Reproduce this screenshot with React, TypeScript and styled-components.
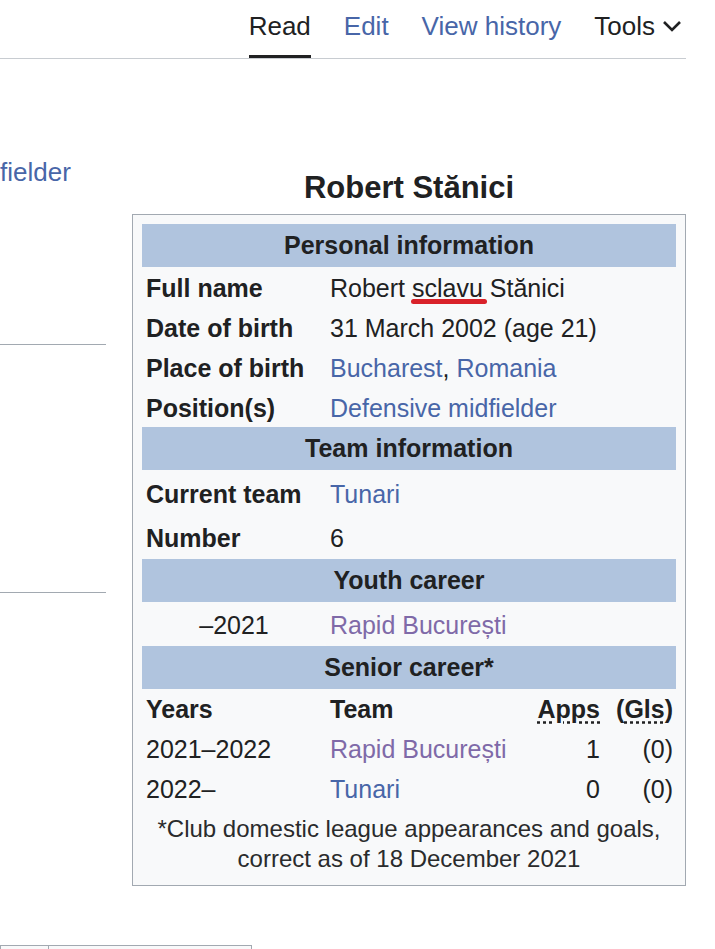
import styled, {createGlobalStyle} from "styled-components";

const GlobalStyle = createGlobalStyle`
	body {
		margin: 0;
		background: #ffffff;
		color: #202122;
		font-family: "Liberation Sans", Arial, sans-serif;
		overflow: hidden;
	}
`;

const Page = styled.div`
	width: 686px;
`;

const TopBar = styled.div`
	display: flex;
	justify-content: flex-end;
	gap: 33px;
	height: 58px;
	padding-right: 3px;
	border-bottom: 1px solid #c8ccd1;
`;

const Tab = styled.a<{ $active?: boolean; $link?: boolean }>`
	display: flex;
	align-items: flex-start;
	gap: 6px;
	box-sizing: border-box;
	height: 58px;
	padding-top: 10px;
	font-size: 26px;
	line-height: 32px;
	color: ${(p) => (p.$link ? "#4866a8" : "#202122")};
	border-bottom: 3px solid ${(p) => (p.$active ? "#202122" : "transparent")};
	text-decoration: none;
`;

const Chevron = styled.svg`
	margin-top: 9px;
`;

const Content = styled.div`
	display: flex;
	align-items: flex-start;
`;

const LeftCol = styled.div`
	display: flex;
	flex-direction: column;
	width: 106px;
	flex-shrink: 0;
	padding-top: 93px;
`;

const Lead = styled.a`
	height: 40px;
	font-size: 26px;
	line-height: 40px;
	color: #4866a8;
	white-space: nowrap;
`;

const Rule = styled.div<{ $top: number }>`
	height: 1px;
	margin-top: ${(p) => p.$top}px;
	background: #a2a9b1;
`;

const InfoboxWrap = styled.div`
	width: 554px;
	margin-left: 26px;
	margin-top: 109px;
`;

const Caption = styled.div`
	font-size: 31px;
	font-weight: bold;
	line-height: 40px;
	text-align: center;
	margin-bottom: 6px;
`;

const Box = styled.div`
	display: flex;
	flex-direction: column;
	border: 1px solid #a2a9b1;
	background: #f8f9fa;
	padding: 9px;
	font-size: 25px;
	line-height: 1.25;
`;

const SectionHeader = styled.div`
	display: flex;
	align-items: center;
	justify-content: center;
	height: 43px;
	background: #b0c4de;
	font-weight: bold;
`;

const InfoRow = styled.div<{ $h: number }>`
	display: flex;
	align-items: center;
	box-sizing: border-box;
	height: ${(p) => p.$h}px;
	padding-top: 4px;
`;

const Label = styled.div<{ $center?: boolean }>`
	box-sizing: border-box;
	width: 184px;
	padding: 0 4px;
	font-weight: ${(p) => (p.$center ? "normal" : "bold")};
	text-align: ${(p) => (p.$center ? "center" : "left")};
`;

const Value = styled.div`
	padding-left: 4px;
`;

const WikiLink = styled.a<{ $visited?: boolean }>`
	color: ${(p) => (p.$visited ? "#7f6aa8" : "#4866a8")};
	text-decoration: none;
`;

const Marked = styled.span`
	position: relative;

	&::after {
		content: "";
		position: absolute;
		left: -1px;
		right: -4px;
		bottom: -2px;
		height: 5px;
		border-radius: 3px;
		background: #d9222a;
	}
`;

const CareerRow = styled.div<{ $head?: boolean }>`
	display: grid;
	grid-template-columns: 184px 204px 74px 72px;
	align-items: center;
	box-sizing: border-box;
	height: 40px;
	padding-top: 2px;
	font-weight: ${(p) => (p.$head ? "bold" : "normal")};
`;

const Cell = styled.div<{ $right?: boolean; $pad?: number }>`
	padding: 0 ${(p) => p.$pad ?? 4}px 0 4px;
	text-align: ${(p) => (p.$right ? "right" : "left")};
	white-space: nowrap;
`;

const Abbr = styled.abbr`
	text-decoration: underline dotted;
	text-underline-offset: 3px;
`;

const Footnote = styled.div`
	padding: 5px 0 2px;
	font-size: 24px;
	line-height: 30px;
	text-align: center;
	color: #2a2b2c;
`;

const BottomTable = styled.div`
	display: flex;
	width: 250px;
	height: 30px;
	margin-top: 59px;
	border: 1px solid #a2a9b1;
	border-bottom: none;
	background: #f8f9fa;
`;

const BottomCell = styled.div<{ $w?: number }>`
	width: ${(p) => (p.$w ? `${p.$w}px` : "auto")};
	flex: ${(p) => (p.$w ? "none" : "1")};
	border-right: ${(p) => (p.$w ? "1px solid #a2a9b1" : "none")};
`;

const career = [
	{years: "2021–2022", team: "Rapid București", visited: true, apps: "1", gls: "(0)"},
	{years: "2022–", team: "Tunari", visited: false, apps: "0", gls: "(0)"},
];

export default function App() {
	return <>
		<GlobalStyle/>
		<Page>
			<TopBar>
				<Tab $active>Read</Tab>
				<Tab $link>Edit</Tab>
				<Tab $link>View history</Tab>
				<Tab>
					Tools
					<Chevron width="22" height="14" viewBox="0 0 22 14">
						<polyline points="3,3 11,11 19,3" fill="none" stroke="#202122" strokeWidth="2.6"/>
					</Chevron>
				</Tab>
			</TopBar>

			<Content>
				<LeftCol>
					<Lead>fielder</Lead>
					<Rule $top={152}/>
					<Rule $top={247}/>
				</LeftCol>

				<InfoboxWrap>
					<Caption>Robert Stănici</Caption>
					<Box>
						<SectionHeader>Personal information</SectionHeader>
						<InfoRow $h={40}>
							<Label>Full name</Label>
							<Value>Robert <Marked>sclavu</Marked> Stănici</Value>
						</InfoRow>
						<InfoRow $h={40}>
							<Label>Date of birth</Label>
							<Value>31 March 2002 (age 21)</Value>
						</InfoRow>
						<InfoRow $h={40}>
							<Label>Place of birth</Label>
							<Value><WikiLink>Bucharest</WikiLink>, <WikiLink>Romania</WikiLink></Value>
						</InfoRow>
						<InfoRow $h={40}>
							<Label>Position(s)</Label>
							<Value><WikiLink>Defensive midfielder</WikiLink></Value>
						</InfoRow>

						<SectionHeader>Team information</SectionHeader>
						<InfoRow $h={44.5}>
							<Label>Current team</Label>
							<Value><WikiLink>Tunari</WikiLink></Value>
						</InfoRow>
						<InfoRow $h={44.5}>
							<Label>Number</Label>
							<Value>6</Value>
						</InfoRow>

						<SectionHeader>Youth career</SectionHeader>
						<InfoRow $h={44}>
							<Label $center>–2021</Label>
							<Value><WikiLink $visited>Rapid București</WikiLink></Value>
						</InfoRow>

						<SectionHeader>Senior career*</SectionHeader>
						<CareerRow $head>
							<Cell>Years</Cell>
							<Cell>Team</Cell>
							<Cell $right><Abbr>Apps</Abbr></Cell>
							<Cell $right $pad={3}>(<Abbr>Gls</Abbr>)</Cell>
						</CareerRow>
						{career.map((row) => (
							<CareerRow key={row.years}>
								<Cell>{row.years}</Cell>
								<Cell><WikiLink $visited={row.visited}>{row.team}</WikiLink></Cell>
								<Cell $right>{row.apps}</Cell>
								<Cell $right $pad={3}>{row.gls}</Cell>
							</CareerRow>
						))}
						<Footnote>
							*Club domestic league appearances and goals,<br/>
							correct as of 18 December 2021
						</Footnote>
					</Box>
				</InfoboxWrap>
			</Content>

			<BottomTable>
				<BottomCell $w={47}/>
				<BottomCell/>
			</BottomTable>
		</Page>
	</>;
}
